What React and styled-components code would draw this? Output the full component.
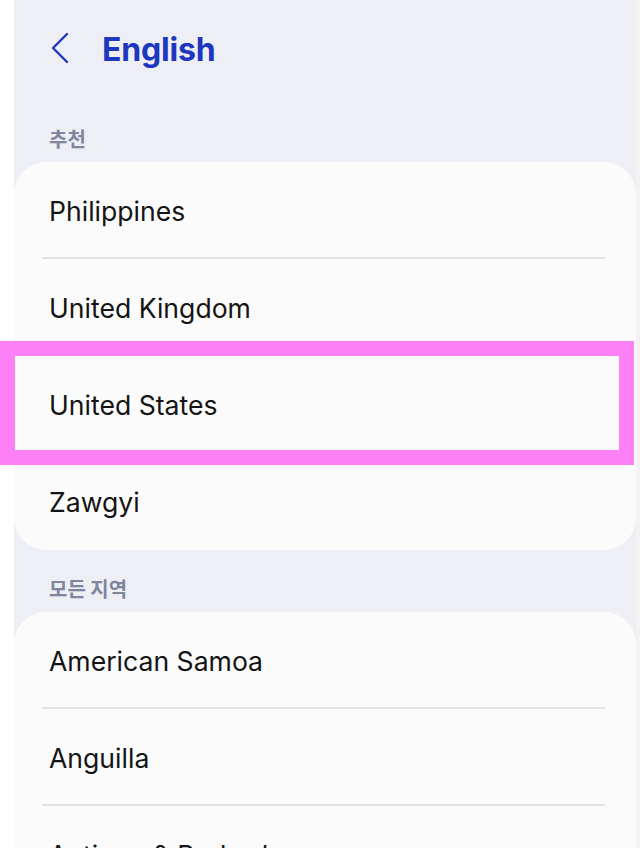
import React from "react";
import styled, { createGlobalStyle } from "styled-components";

const Global = createGlobalStyle`
  html, body { margin: 0; padding: 0; background: #ffffff; }
  body { font-family: Inter, "Noto Sans CJK KR", sans-serif; }
`;

const Frame = styled.div`
  position: relative;
  display: flex;
  width: 640px;
  height: 857px;
  background: #ffffff;
  padding-left: 14px;
  box-sizing: border-box;
`;

const Screen = styled.div`
  width: 622px;
  height: 848px;
  overflow: hidden;
  background: #eeeff5;
  display: flex;
  flex-direction: column;
`;

const RightEdge = styled.div`
  width: 4px;
  height: 848px;
  background: #f3f3f4;
`;

const Header = styled.header`
  height: 100px;
  display: flex;
  align-items: center;
  padding-left: 37px;
  gap: 33px;
  box-sizing: border-box;
  flex-shrink: 0;
`;

const BackIcon = styled.svg`
  width: 18px;
  height: 32px;
  margin-top: -4px;
`;

const Title = styled.h1`
  margin: 0;
  font-family: Inter, sans-serif;
  font-size: 32px;
  font-weight: 700;
  letter-spacing: -0.2px;
  color: #1d37bf;
  margin-top: -2px;
`;

const SectionLabel = styled.div`
  height: 62px;
  box-sizing: border-box;
  padding: 27px 0 11px 35px;
  font-family: "Noto Sans CJK KR", sans-serif;
  font-size: 20px;
  line-height: 24px;
  font-weight: 700;
  color: #80859f;
  flex-shrink: 0;
`;

const Card = styled.div`
  background: #fbfbfb;
  border-radius: 32px;
  flex-shrink: 0;
  overflow: hidden;
`;

const Row = styled.div`
  position: relative;
  height: 97px;
  display: flex;
  align-items: center;
  padding-left: 35px;
  font-family: Inter, sans-serif;
  font-size: 26.6px;
  color: #141414;
  box-sizing: border-box;
  &::after {
    content: "";
    display: ${(p) => (p.$last ? "none" : "block")};
    position: absolute;
    left: 28px;
    right: 31px;
    bottom: 0;
    height: 2px;
    background: #e2e2e4;
  }
`;

const Highlight = styled.div`
  position: absolute;
  left: 0;
  top: 341px;
  width: 634px;
  height: 124px;
  box-sizing: border-box;
  border: 15px solid #fe80f7;
  pointer-events: none;
`;

const recommended = ["Philippines", "United Kingdom", "United States", "Zawgyi"];
const all = ["American Samoa", "Anguilla", "Antigua & Barbuda"];

export default function App() {
  return (
    <>
      <Global />
      <Frame>
        <Screen>
          <Header>
            <BackIcon viewBox="0 0 18 32" fill="none">
              <polyline
                points="16,2 2,16 16,30"
                stroke="#1d37bf"
                strokeWidth="2.4"
                strokeLinecap="round"
                strokeLinejoin="round"
              />
            </BackIcon>
            <Title>English</Title>
          </Header>
          <SectionLabel>추천</SectionLabel>
          <Card>
            {recommended.map((r, i) => (
              <Row key={r} $last={i === recommended.length - 1}>
                {r}
              </Row>
            ))}
          </Card>
          <SectionLabel>모든 지역</SectionLabel>
          <Card>
            {all.map((r) => (
              <Row key={r}>{r}</Row>
            ))}
          </Card>
        </Screen>
        <RightEdge />
        <Highlight />
      </Frame>
    </>
  );
}
